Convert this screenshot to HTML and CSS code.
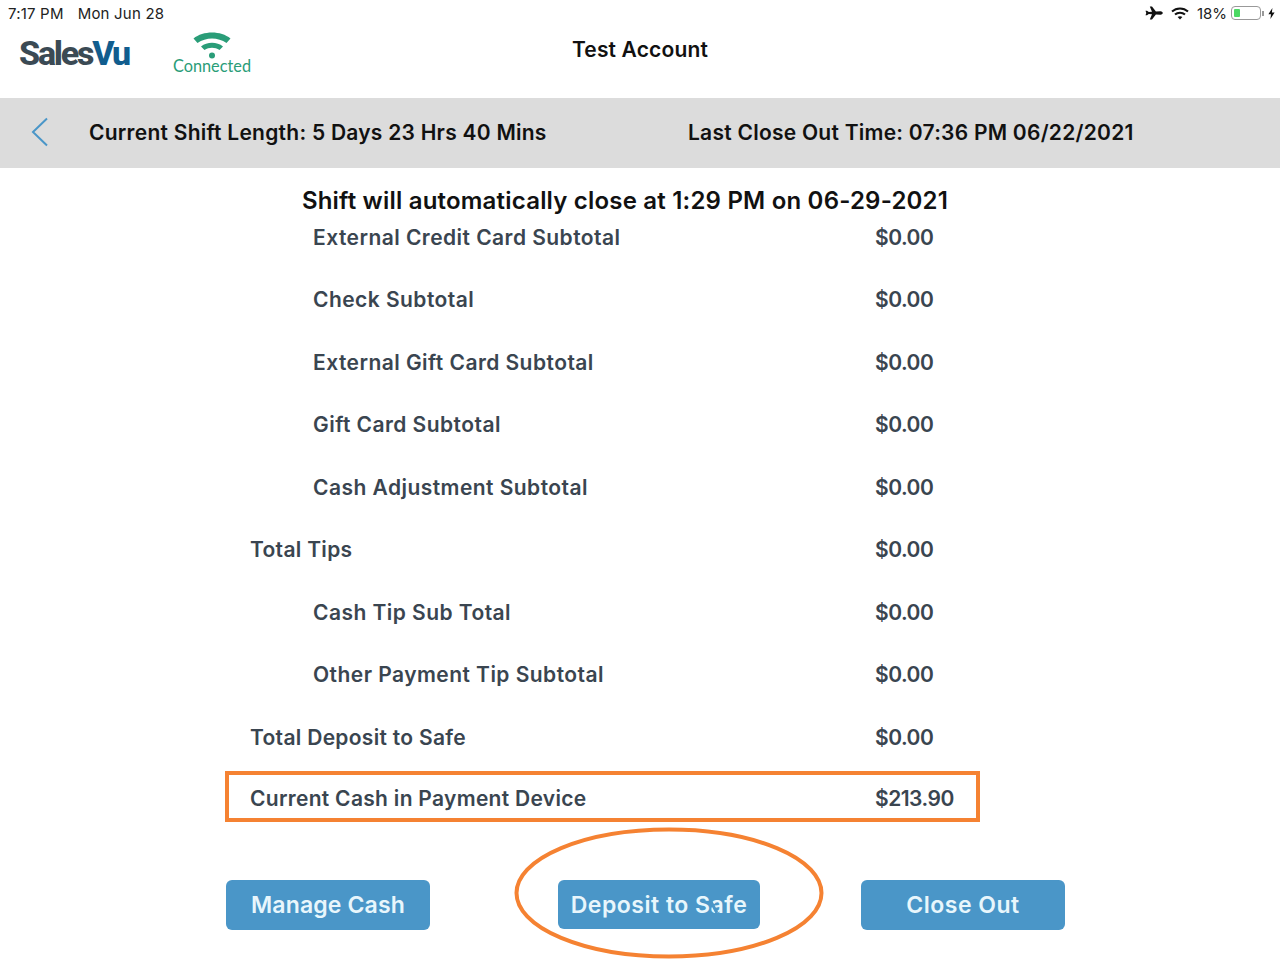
FILE: index.html
```html
<!DOCTYPE html>
<html lang="en">
<head>
    <meta charset="UTF-8">
    <title>SalesVu Close Out</title>
    <link rel="stylesheet" href="styles.css">
</head>
<body>
    <div class="status-bar">
        <div class="status-left">
            <span>7:17 PM</span>
            <span>Mon Jun 28</span>
        </div>
        <div class="status-right">
            <svg class="plane" width="18" height="14" viewBox="0 0 18 14"><path d="M0.5 4.800 L2 4.800 L3.800 6 L7 5.800 L4.800 0.500 L7 0.500 L10.900 5.500 L15.500 5.300 C17 5.300 17.800 6.400 17.800 7 C17.800 7.600 17 8.700 15.500 8.700 L10.900 8.500 L7 13.500 L4.800 13.500 L7 8.200 L3.800 8 L2 9.200 L0.500 9.200 L1.300 7 Z" fill="#111"/></svg>
            <svg class="status-wifi" width="18" height="13" viewBox="0 0 18 13"><path d="M1 4.600 C5.500 0.400 12.500 0.400 17 4.600" fill="none" stroke="#111" stroke-width="2"/><path d="M4 7.600 C6.800 5 11.200 5 14 7.600" fill="none" stroke="#111" stroke-width="2"/><path d="M9 12.600 L6.600 10 C8 8.900 10 8.900 11.400 10 Z" fill="#111"/></svg>
            <span class="battery-pct">18%</span>
            <div class="battery"><div class="battery-level"></div></div>
            <div class="battery-tip"></div>
            <svg class="bolt" width="7" height="11" viewBox="0 0 7 11"><path d="M4.400 0 L0.400 6.200 L3 6.200 L2.400 11 L6.600 4.400 L3.900 4.400 Z" fill="#111"/></svg>
        </div>
    </div>

    <header class="top-header">
        <div class="brand">
            <div class="logo"><span class="logo-sales">Sales</span><span class="logo-vu">Vu</span></div>
            <div class="connection">
                <svg width="38" height="29" viewBox="0 0 38 29"><path d="M0.500 7.500 C10 -0.500 28 -0.500 37.500 7.500 L33.500 12 C25 6 13 6 4.500 12 Z" fill="#2a9d78"/><path d="M8 15.500 C14 10.500 24 10.500 30 15.500 L26.500 19 C22 16 16 16 11.500 19 Z" fill="#2a9d78"/><circle cx="19" cy="24.500" r="3" fill="#2a9d78"/></svg>
                <span class="connection-label">Connected</span>
            </div>
        </div>
        <div class="account">Test Account</div>
    </header>

    <div class="shift-bar">
        <svg class="back" width="18" height="30" viewBox="0 0 18 30"><path d="M16 1.500 L2 15 L16 28.500" fill="none" stroke="#4a96c8" stroke-width="2"/></svg>
        <div class="shift-length">Current Shift Length: 5 Days 23 Hrs 40 Mins</div>
        <div class="last-close">Last Close Out Time: 07:36 PM 06/22/2021</div>
    </div>

    <main>
        <h1 class="auto-close">Shift will automatically close at 1:29 PM on 06-29-2021</h1>
        <div class="rows">
            <div class="row sub"><span>External Credit Card Subtotal</span><span class="amount">$0.00</span></div>
            <div class="row sub"><span>Check Subtotal</span><span class="amount">$0.00</span></div>
            <div class="row sub"><span>External Gift Card Subtotal</span><span class="amount">$0.00</span></div>
            <div class="row sub"><span>Gift Card Subtotal</span><span class="amount">$0.00</span></div>
            <div class="row sub"><span>Cash Adjustment Subtotal</span><span class="amount">$0.00</span></div>
            <div class="row"><span>Total Tips</span><span class="amount">$0.00</span></div>
            <div class="row sub"><span>Cash Tip Sub Total</span><span class="amount">$0.00</span></div>
            <div class="row sub"><span>Other Payment Tip Subtotal</span><span class="amount">$0.00</span></div>
            <div class="row"><span>Total Deposit to Safe</span><span class="amount">$0.00</span></div>
            <div class="row highlight"><span>Current Cash in Payment Device</span><span class="amount">$213.90</span></div>
        </div>
        <div class="actions">
            <button class="btn btn-manage">Manage Cash</button>
            <button class="btn btn-deposit">Deposit to Safe</button>
            <button class="btn btn-close">Close Out</button>
        </div>
    </main>

    <svg class="circle-mark" width="312" height="134" viewBox="0 0 312 134"><ellipse cx="155" cy="66" rx="152.500" ry="63.500" fill="none" stroke="#f58232" stroke-width="4"/></svg>
    <!-- the finger smudge sitting on the "a" of Safe -->
    <svg class="smudge" width="12" height="20" viewBox="0 0 12 20"><path d="M1 5 L8 18" fill="none" stroke="#4a96c8" stroke-width="3"/></svg>
</body>
</html>
```

FILE: styles.css
```css
* {
    margin: 0;
    padding: 0;
    box-sizing: border-box;
}

body {
    background-color: #ffffff;
    color: #111111;
    font-family: 'Inter', 'Liberation Sans', sans-serif;
    height: 960px;
    overflow: hidden;
    position: relative;
}

.status-bar {
    height: 26px;
    padding: 0 5px 0 8px;
    display: flex;
    justify-content: space-between;
    align-items: center;
    font-size: 15px;
    letter-spacing: 0.200px;
    color: #222;
}

.status-left {
    display: flex;
    gap: 14px;
}

.status-right {
    display: flex;
    align-items: center;
}

.status-wifi {
    margin-left: 8px;
}

.battery-pct {
    margin-left: 8px;
    letter-spacing: 0;
}

.battery {
    width: 30px;
    height: 14px;
    margin-left: 4px;
    padding: 2px;
    border: 1px solid #999;
    border-radius: 4px;
}

.battery-level {
    width: 6px;
    height: 100%;
    background-color: #4cd964;
    border-radius: 1px;
}

.battery-tip {
    width: 2px;
    height: 5px;
    margin-left: 1px;
    background-color: #999;
}

.bolt {
    margin-left: 4px;
}

.top-header {
    height: 72px;
    position: relative;
    display: flex;
    justify-content: center;
}

.brand {
    position: absolute;
    left: 19px;
    top: 5px;
    display: flex;
}

.logo {
    width: 109px;
    margin-top: 3px;
    font-family: 'Roboto', sans-serif;
    font-size: 34px;
    font-weight: 800;
    letter-spacing: -2.200px;
    line-height: 38px;
    white-space: nowrap;
}

.logo-sales {
    color: #3b4a54;
}

.logo-vu {
    color: #115d8e;
}

.connection {
    margin-left: 45px;
    display: flex;
    flex-direction: column;
    align-items: center;
}

.connection-label {
    margin-top: -4px;
    font-family: 'Lato', sans-serif;
    font-size: 16.300px;
    line-height: 20px;
    color: #2a9d78;
}

.account {
    margin-top: 11px;
    font-size: 21px;
    font-weight: 600;
    letter-spacing: 0.150px;
    line-height: 26px;
}

.shift-bar {
    height: 70px;
    padding-bottom: 2px;
    background-color: #dcdcdc;
    display: flex;
    align-items: center;
    font-size: 21px;
    font-weight: 600;
    letter-spacing: 0.250px;
}

.back {
    margin-left: 31px;
}

.shift-length {
    margin-left: 40px;
    width: 599px;
}

main {
    padding-left: 225px;
}

.auto-close {
    width: 800px;
    margin-top: 19px;
    text-align: center;
    font-size: 24px;
    font-weight: 600;
    letter-spacing: 0.200px;
    line-height: 28px;
}

.rows {
    width: 755px;
    margin-top: -9px;
}

.row {
    height: 62.500px;
    padding-left: 25px;
    display: grid;
    grid-template-columns: 625px 1fr;
    align-items: center;
    font-size: 21px;
    font-weight: 600;
    letter-spacing: 0.300px;
    color: #3a4550;
}

.row .amount {
    letter-spacing: -0.500px;
}

.row.sub {
    letter-spacing: 0.450px;
}

.row.sub span:first-child {
    padding-left: 63px;
}

.row.highlight {
    height: 51px;
    margin-top: 2.500px;
    padding-top: 4px;
    padding-left: 21px;
    border: 4px solid #f58232;
}

.actions {
    margin-top: 58px;
    display: flex;
}

.btn {
    width: 204px;
    height: 50px;
    background-color: #4a96c8;
    color: #e8f6fc;
    border: none;
    border-radius: 6px;
    font-family: inherit;
    font-size: 23px;
    font-weight: 600;
    letter-spacing: 0.500px;
}

.btn-manage {
    margin-left: 1px;
    letter-spacing: 0.150px;
}

.btn-deposit {
    width: 202px;
    height: 49px;
    margin-left: 128px;
}

.btn-close {
    margin-left: 101px;
}

.circle-mark {
    position: absolute;
    left: 514px;
    top: 827px;
}

.smudge {
    position: absolute;
    left: 709px;
    top: 895px;
}
```
